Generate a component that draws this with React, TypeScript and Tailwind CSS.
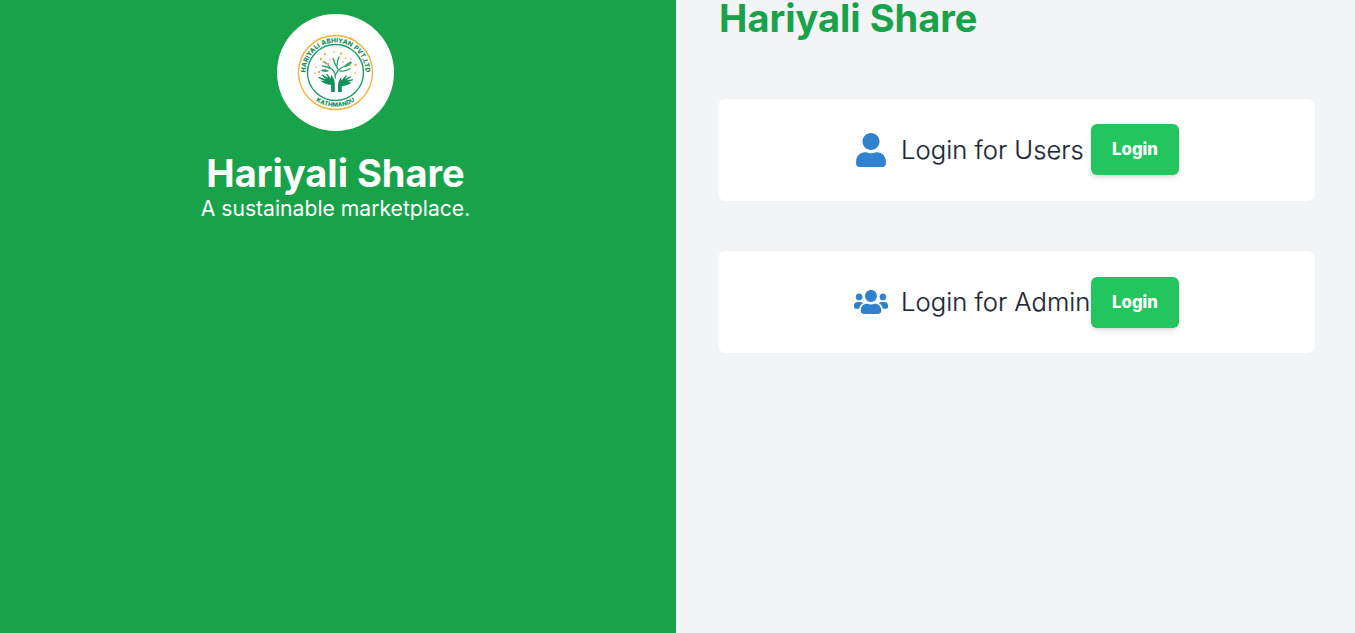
import { FaUser, FaUsers } from "react-icons/fa";
import type { ReactNode } from "react";

const DOTS: [number, number][] = [
  [30, 22], [35, 27.5], [39, 20], [26, 27], [21, 35], [28, 30], [46, 21.5], [50.5, 26],
  [56, 27], [60.5, 33], [53, 38], [20, 41], [24, 40], [48, 30], [60, 41], [33, 32], [55, 33.5],
];

function Logo() {
  return (
    <svg viewBox="0 0 82 82" className="h-[82px] w-[82px]" aria-label="Hariyali Abhiyan">
      <defs>
        <path id="arc-top" d="M 12 50 A 30 30 0 1 1 69 50" />
        <path id="arc-bottom" d="M 10 56.5 A 34.5 34.5 0 0 0 71 56.5" />
      </defs>
      <circle cx="40.5" cy="40.5" r="37" fill="none" stroke="#f0b33c" strokeWidth="1.4" />
      <circle cx="40.5" cy="40.5" r="28" fill="none" stroke="#1f9d68" strokeWidth="1.4" />
      <g fill="#11905a" fontFamily="Inter, sans-serif" fontWeight="800">
        <text textAnchor="middle" fontSize="6.5" wordSpacing="0.6">
          <textPath href="#arc-top" startOffset="50%">HARIYALI ABHIYAN PVT.LTD</textPath>
        </text>
        <text textAnchor="middle" fontSize="6" letterSpacing="0.1">
          <textPath href="#arc-bottom" startOffset="50%">KATHMANDU</textPath>
        </text>
      </g>
      <g fill="none" stroke="#2fa06e" strokeWidth="1.3" strokeLinecap="round">
        <path d="M40.5 46 C40.5 38 36 35.5 27.5 34" />
        <path d="M35 36 C34 33.5 31.5 31 29 29.5" />
        <path d="M40.5 43 C41 40 45 36 49 34.5 C52 33.5 54 32.5 55.5 30" />
        <path d="M43.5 38 C41 34 39.5 32 38 26.5" />
        <path d="M42 34 C42 30 43 27 44 25" />
        <path d="M45 39 C49 39.5 52 39 55 36.5" />
      </g>
      <g fill="#2fa06e">
        <path d="M49 35 C51 31 54 30 57.5 30 C55 33.5 52 35 49 35 Z" />
        <path d="M25.5 38.5 C28.5 36.5 31.5 37 34 39 C31 40.5 28 40 25.5 38.5 Z" />
      </g>
      <g fill="#11905a">
        <path d="M36.2 60 L36 53 C32 52.4 28 51.6 25 48.6 L30 49.2 L23 45.7 L24 45 L31 47.2 L26.5 43.3 L27.5 42.6 L33.5 46.2 L31 42.2 L32 41.8 L36 46.5 L36 43 C38.4 45 39.6 48 39.8 51 L39.8 60 Z" />
        <path d="M43 60 L43 53 C43.3 50 44.5 47 46.3 45 L46.3 48.4 L51 43.2 L52 43.8 L49.5 47.2 L55.5 44 L56 45 L51.5 48.2 L58 47.2 L58 48.2 L53 50 L56.5 50.4 C54 53 50.5 53.2 46.8 54.5 L46.8 60 Z" />
      </g>
      <g fill="#f2ae45">
        {DOTS.map(([x, y], i) => (
          <circle key={i} cx={x} cy={y} r={i % 3 === 0 ? 1.2 : 0.85} />
        ))}
      </g>
    </svg>
  );
}

function LoginCard({ icon, label, buttonClass }: { icon: ReactNode; label: string; buttonClass: string }) {
  return (
    <div className="flex h-[102px] items-center justify-center rounded-lg bg-white">
      <div className="flex w-[325px] items-center">
        <span className="flex w-[34px] shrink-0 justify-center text-[#3182ce]">{icon}</span>
        <span className="ml-[13px] w-[190px] shrink-0 whitespace-nowrap text-[25.6px] font-light tracking-[0.03px] text-gray-800 [-webkit-text-stroke:0.2px_currentColor]">
          {label}
        </span>
        <button
          className={`h-[51px] w-[88px] shrink-0 rounded-md bg-[#22c55e] pt-[2px] text-[16.7px] font-extrabold text-white shadow-md ${buttonClass}`}
        >
          Login
        </button>
      </div>
    </div>
  );
}

export default function App() {
  return (
    <div className="flex h-[633px] w-full overflow-hidden bg-[#f3f4f6] font-['Inter',sans-serif]">
      <section className="flex w-[676px] shrink-0 flex-col items-center bg-[#18a34a] pt-[14px] pr-[5px] text-white">
        <div className="flex h-[117px] w-[117px] items-center justify-center rounded-full bg-white">
          <Logo />
        </div>
        <h1 className="mt-[23px] text-[38px] leading-[38px] font-bold">Hariyali Share</h1>
        <p className="mt-[6px] text-[21.15px] leading-[22px]">A sustainable marketplace.</p>
      </section>
      <main className="flex-1 pr-10 pl-[42px]">
        <h2 className="mb-[62px] pl-px text-[38px] leading-[37px] font-bold text-[#18a34a]">
          Hariyali Share
        </h2>
        <div className="flex flex-col gap-[50px]">
          <LoginCard icon={<FaUser size={34} />} label="Login for Users" buttonClass="mb-[2px]" />
          <LoginCard icon={<FaUsers size={34} />} label="Login for Admin" buttonClass="mb-0" />
        </div>
      </main>
    </div>
  );
}
